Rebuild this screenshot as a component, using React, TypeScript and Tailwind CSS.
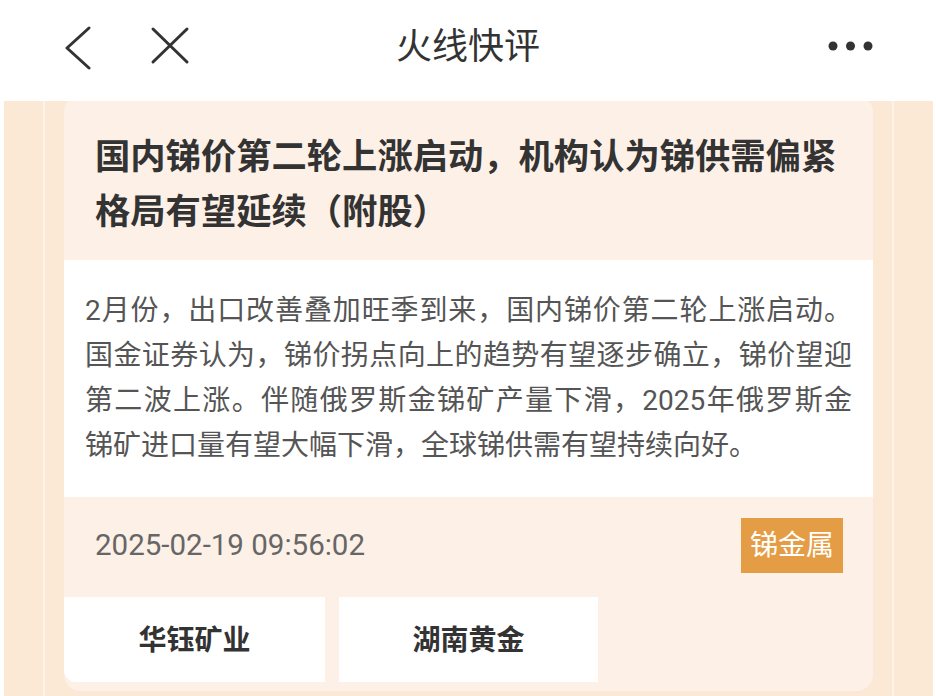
import React from "react";

const FONT = { fontFamily: "Roboto, 'Noto Sans CJK SC', 'Noto Sans', sans-serif" };

const bodyLines = [
  "2月份，出口改善叠加旺季到来，国内锑价第二轮上涨启动。",
  "国金证券认为，锑价拐点向上的趋势有望逐步确立，锑价望迎",
  "第二波上涨。伴随俄罗斯金锑矿产量下滑，2025年俄罗斯金",
  "锑矿进口量有望大幅下滑，全球锑供需有望持续向好。",
];

export default function App() {
  return (
    <div
      className="w-[936px] h-[696px] overflow-hidden bg-white flex flex-col"
      style={FONT}
    >
      {/* Header */}
      <div className="relative z-10 h-[101px] shrink-0 bg-white grid grid-cols-[1fr_auto_1fr]">
        <div className="flex items-start">
          <svg width="40" height="44" viewBox="0 0 40 44" className="ml-[56px] mt-[26px]">
            <polyline points="33,2 11,22 33,42" fill="none" stroke="#333" strokeWidth="3" strokeLinecap="round" strokeLinejoin="round" />
          </svg>
          <svg width="40" height="40" viewBox="0 0 40 40" className="ml-[54px] mt-[26px]">
            <line x1="3" y1="3" x2="37" y2="36" stroke="#333" strokeWidth="3" strokeLinecap="round" />
            <line x1="37" y1="3" x2="3" y2="36" stroke="#333" strokeWidth="3" strokeLinecap="round" />
          </svg>
        </div>
        <div className="flex items-start pt-[22px] text-[36px] leading-[50px] text-[#333]">火线快评</div>
        <div className="flex items-start justify-end">
          <svg width="50" height="12" viewBox="0 0 50 12" className="mr-[60px] mt-[40px]">
            <circle cx="7" cy="6" r="4.5" fill="#333" />
            <circle cx="24.5" cy="6" r="4.5" fill="#333" />
            <circle cx="42" cy="6" r="4.5" fill="#333" />
          </svg>
        </div>
      </div>

      {/* Body */}
      <div className="flex-1 flex ml-[4px] mr-[3px] bg-[#fbe8d5] overflow-hidden">
        <div className="w-[41px] shrink-0 border-r-2 border-[#fdf2e7]" />
        <div className="w-[19px] shrink-0" />

        <div className="flex-1 -mt-[5px] mb-[5px] rounded-[16px] bg-[#fdf0e6] flex flex-col overflow-hidden">
          {/* Title */}
          <div className="pt-[34px] pb-[20px] pl-[31px] pr-[30px] h-[164px] text-[35.3px] leading-[55px] font-bold text-[#333]">
            国内锑价第二轮上涨启动，机构认为锑供需偏紧格局有望延续（附股）
          </div>

          {/* Summary */}
          <div className="h-[237px] bg-white px-[21px] pt-[28px] text-[28px] leading-[45px] text-[#555]">
            {bodyLines.map((l, i) => (
              <div
                key={i}
                className={
                  i < 3
                    ? "text-justify [text-align-last:justify] whitespace-nowrap"
                    : "whitespace-nowrap"
                }
              >
                {l}
              </div>
            ))}
          </div>

          {/* Footer */}
          <div className="h-[100px] flex items-center justify-between pl-[31px] pr-[30px] pb-[3px]">
            <span className="text-[29.5px] text-[#666]">2025-02-19 09:56:02</span>
            <span className="h-[55px] px-[9px] flex items-center bg-[#e59d45] text-white text-[28px]">
              锑金属
            </span>
          </div>

          {/* Stocks */}
          <div className="flex gap-[14px] h-[85px]">
            <div className="w-[261px] bg-white rounded-bl-[12px] flex items-center justify-center pt-[3px] text-[28px] font-bold text-[#333]">
              华钰矿业
            </div>
            <div className="w-[259px] bg-white flex items-center justify-center pt-[3px] text-[28px] font-bold text-[#333]">
              湖南黄金
            </div>
          </div>
          <div className="h-[9px] shrink-0" />
        </div>

        <div className="w-[21px] shrink-0 border-r-2 border-[#fdf2e7]" />
        <div className="w-[39px] shrink-0" />
      </div>
    </div>
  );
}
